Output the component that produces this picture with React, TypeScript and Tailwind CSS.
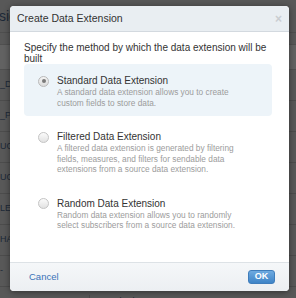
import React from 'react';

const bgRows = ['_D', '_P', 'UC', 'UC', 'LE', 'HA', '-'];

const options = [
  {
    title: 'Standard Data Extension',
    desc: ['A standard data extension allows you to create', 'custom fields to store data.'],
    selected: true,
  },
  {
    title: 'Filtered Data Extension',
    desc: [
      'A filtered data extension is generated by filtering',
      'fields, measures, and filters for sendable data',
      'extensions from a source data extension.',
    ],
    selected: false,
  },
  {
    title: 'Random Data Extension',
    desc: ['Random data extension allows you to randomly', 'select subscribers from a source data extension.'],
    selected: false,
  },
];

const Radio: React.FC<{ checked: boolean }> = ({ checked }) =>
  checked ? (
    <span className="flex h-[11px] w-[11px] shrink-0 items-center justify-center rounded-full border border-[#b9b9b9] bg-gradient-to-b from-[#f4f4f4] to-[#dcdcdc]">
      <span className="h-[4px] w-[4px] rounded-full bg-[#7a7a7a]" />
    </span>
  ) : (
    <span className="h-[11px] w-[11px] shrink-0 rounded-full border border-[#c4c4c4] bg-gradient-to-b from-[#fbfbfb] to-[#e2e2e2]" />
  );

export default function App() {
  return (
    <div
      className="relative h-[298px] w-[296px] overflow-hidden bg-[#585858]"
      style={{ fontFamily: '"Liberation Sans", Arial, sans-serif' }}
    >
      {/* page behind the overlay */}
      <div className="flex flex-col text-[#1c2837]">
        <div className="flex h-[33px] items-center border-b border-[#4e4e4e] pl-0 text-[14px] leading-none">
          <span className="-ml-[1px]">sio</span>
        </div>
        <div className="h-[12px] border-b border-[#505050]" />
        <div className="h-[25px] border-b border-[#505050] bg-[#626262]" />
        {bgRows.map((r, i) => (
          <div key={i} className="flex h-[31px] items-center border-b border-[#4c4c4c] text-[9px]">
            <span>{r}</span>
          </div>
        ))}
        <div className="flex h-[31px] items-start pt-[8px] text-[9px]">
          <span className="w-[90px] border-r border-[#4c4c4c]">ONED_CART_EVENT</span>
          <span className="w-[100px] pl-[8px]">Standard</span>
          <span className="pl-[8px]">No</span>
        </div>
      </div>

      {/* modal */}
      <div className="absolute left-[10px] top-[6px] flex h-[285px] w-[279px] flex-col overflow-hidden rounded-[4px] bg-white shadow-[0_1px_6px_rgba(0,0,0,0.45)]">
        <div className="flex h-[26px] shrink-0 items-center justify-between border-b border-[#d3d9df] bg-[#e9eef2] pl-[7px] pr-[7px]">
          <span className="text-[10.5px] text-[#333]">Create Data Extension</span>
          <span className="text-[12px] font-bold leading-none text-[#c9cdd1]">×</span>
        </div>

        <div className="flex flex-1 flex-col pl-[14px] pr-[17px] pt-[10px]">
          <p className="text-[10px] leading-[11px] text-[#333]">
            Specify the method by which the data extension will be built
          </p>
          <div className="flex flex-col gap-[4px]">
            {options.map((o) => (
              <div
                key={o.title}
                className={`flex gap-[8px] rounded-[4px] pb-[8px] pl-[14px] pt-[11px] ${o.selected ? 'bg-[#edf4f9]' : ''}`}
              >
                <div className="flex h-[12px] items-center">
                  <Radio checked={o.selected} />
                </div>
                <div className="flex flex-col">
                  <span className="text-[10px] leading-[12px] text-[#333]">{o.title}</span>
                  {o.desc.map((d) => (
                    <span key={d} className="whitespace-nowrap text-[8.3px] leading-[10.5px] text-[#9c9c9c]">
                      {d}
                    </span>
                  ))}
                </div>
              </div>
            ))}
          </div>
        </div>

        <div className="flex h-[29px] shrink-0 items-center justify-between border-t border-[#dde2e6] bg-gradient-to-b from-[#f5f7f9] to-[#eceff2] pl-[19px] pr-[14px]">
          <span className="text-[9.5px] text-[#3a72b8]">Cancel</span>
          <button className="flex h-[14px] w-[27px] items-center justify-center rounded-[3px] border border-[#3f7dbb] bg-gradient-to-b from-[#6eaae0] to-[#3e84c7] text-[9px] font-bold text-white">
            OK
          </button>
        </div>
      </div>
    </div>
  );
}
